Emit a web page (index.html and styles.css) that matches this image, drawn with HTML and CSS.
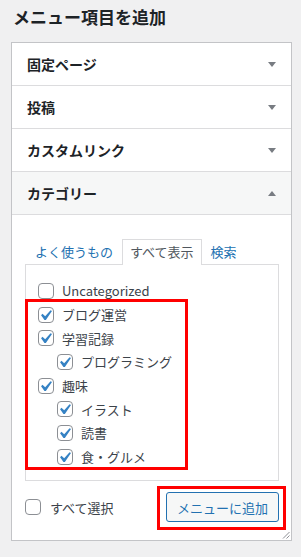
FILE: index.html
```html
<!DOCTYPE html>
<html lang="ja">
<head>
  <meta charset="UTF-8" />
  <meta name="viewport" content="width=device-width, initial-scale=1.0"/>
  <title>メニュー項目を追加</title>
  <link rel="stylesheet" href="styles.css">
</head>
<body>
  <div class="wrap">
    <h2 class="title">メニュー項目を追加</h2>

    <div class="accordion">
      <div class="section">
        <h3 class="section-title">固定ページ<span class="arrow"></span></h3>
      </div>
      <div class="section">
        <h3 class="section-title">投稿<span class="arrow"></span></h3>
      </div>
      <div class="section">
        <h3 class="section-title">カスタムリンク<span class="arrow"></span></h3>
      </div>
      <div class="section open">
        <h3 class="section-title">カテゴリー<span class="arrow up"></span></h3>

        <div class="section-content">
          <ul class="tabs">
            <li>よく使うもの</li>
            <li class="active">すべて表示</li>
            <li>検索</li>
          </ul>

          <div class="tabs-panel">
            <ul class="checklist">
              <li><span class="cb"></span>Uncategorized</li>
              <li><span class="cb checked"></span>ブログ運営</li>
              <li><span class="cb checked"></span>学習記録</li>
              <li class="child"><span class="cb checked"></span>プログラミング</li>
              <li><span class="cb checked"></span>趣味</li>
              <li class="child"><span class="cb checked"></span>イラスト</li>
              <li class="child"><span class="cb checked"></span>読書</li>
              <li class="child"><span class="cb checked"></span>食・グルメ</li>
            </ul>
          </div>

          <div class="actions">
            <label class="select-all"><span class="cb"></span>すべて選択</label>
            <button class="add-button">メニューに追加</button>
          </div>
        </div>
      </div>

      <svg class="resize" viewBox="0 0 8 8" width="8" height="8">
        <path d="M1 7.5 L7.5 1 M4.5 7.5 L7.5 4.5" stroke="#8c8f94" stroke-width="1" fill="none"/>
      </svg>
    </div>

    <!-- highlight frames -->
    <div class="mark mark-list"></div>
    <div class="mark mark-button"></div>
  </div>

  <script>
    document.querySelectorAll('.cb.checked').forEach(function (box) {
      box.innerHTML = '<svg viewBox="0 0 20 20" width="21" height="21"><path d="M14.83 4.89l1.34.94-5.81 8.38H9.02L5.78 9.67l1.34-1.25 2.57 2.4z" fill="#3582c4"/></svg>';
    });
  </script>
</body>
</html>
```

FILE: styles.css
```css
* {
  margin: 0;
  padding: 0;
  box-sizing: border-box;
}

html, body {
  height: 100%;
  font-family: "Noto Sans CJK JP", "Liberation Sans", sans-serif;
}

body {
  background-color: #f0f0f1;
  color: #3c434a;
  overflow: hidden;
}

.wrap {
  position: relative;
}

.title {
  font-size: 17px;
  font-weight: 600;
  color: #1d2327;
  line-height: 24px;
  padding: 5px 0 0 13px;
  margin-bottom: 13px;
}

.accordion {
  position: relative;
  margin-left: 11px;
  width: 281px;
  background-color: #fff;
  border: 1px solid #c3c4c7;
}

.section {
  border-bottom: 1px solid #dcdcde;
}

.section.open {
  border-bottom: none;
}

.section-title {
  position: relative;
  height: 42px;
  line-height: 42px;
  padding: 0 15px;
  font-size: 14px;
  font-weight: 700;
  color: #1d2327;
}

.open .section-title {
  background-color: #f6f7f7;
  border-bottom: 1px solid #dcdcde;
  height: 43px;
}

.arrow {
  position: absolute;
  right: 15px;
  top: 19px;
  width: 0;
  height: 0;
  border-left: 4px solid transparent;
  border-right: 4px solid transparent;
  border-top: 5px solid #787c82;
}

.arrow.up {
  border-top: none;
  border-bottom: 5px solid #787c82;
}

.section-content {
  padding: 24px 12px 18px 13px;
}

.tabs {
  list-style: none;
  display: flex;
  gap: 1px;
  padding-left: 2px;
  font-size: 13px;
}

.tabs li {
  line-height: 24px;
  padding: 0 7px;
  border: 1px solid transparent;
  border-bottom: none;
  color: #2271b1;
}

.tabs li.active {
  color: #50575e;
  border-color: #dcdcde;
  background-color: #fff;
  margin-bottom: -1px;
  height: 26px;
  position: relative;
}

.tabs-panel {
  border: 1px solid #dcdcde;
  height: 217px;
  padding: 14px 12px 0 12px;
}

.checklist {
  list-style: none;
  font-size: 13px;
}

.checklist li {
  display: flex;
  align-items: center;
  gap: 8px;
  height: 23.7px;
  white-space: nowrap;
}

.checklist li.child {
  padding-left: 19px;
}

.cb {
  position: relative;
  flex: none;
  width: 16px;
  height: 16px;
  border: 1px solid #8c8f94;
  border-radius: 4px;
  background-color: #fff;
}

.cb svg {
  position: absolute;
  left: -4px;
  top: -3px;
  display: block;
}

.actions {
  display: flex;
  justify-content: space-between;
  align-items: center;
  margin-top: 11px;
}

.select-all {
  display: flex;
  align-items: center;
  gap: 9px;
  font-size: 13px;
  color: #3c434a;
}

.add-button {
  height: 30px;
  padding: 0 10px;
  font-family: inherit;
  font-size: 13px;
  color: #2271b1;
  background-color: #f6f7f7;
  border: 1px solid #2271b1;
  border-radius: 3px;
  cursor: pointer;
}

.resize {
  position: absolute;
  right: 1px;
  bottom: 1px;
  display: block;
}

.mark {
  position: absolute;
  border: 3px solid #ff0000;
}

.mark-list {
  left: 25px;
  top: 299px;
  width: 163px;
  height: 171px;
}

.mark-button {
  left: 157px;
  top: 486px;
  width: 129px;
  height: 44px;
}
```
